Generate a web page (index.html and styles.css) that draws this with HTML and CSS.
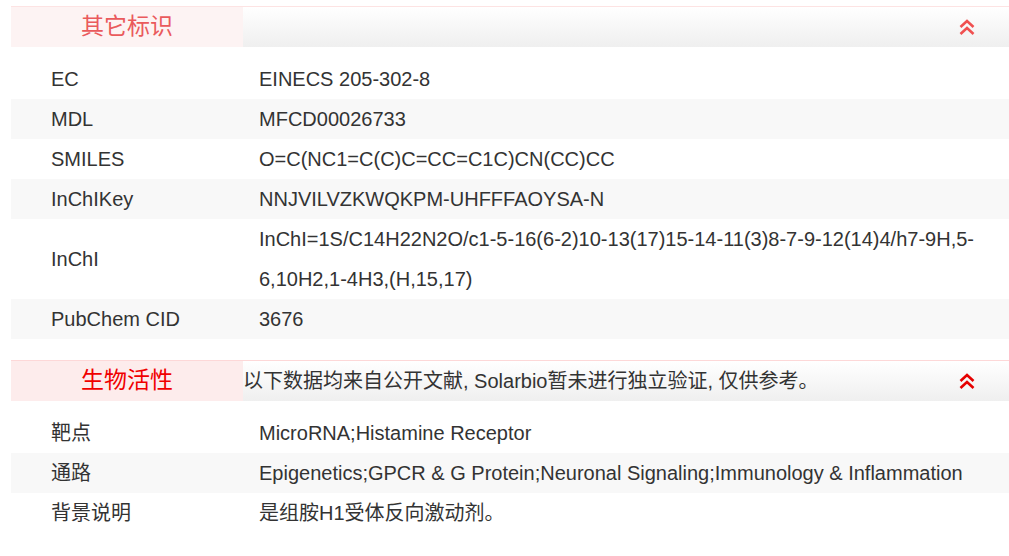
FILE: index.html
```html
<!DOCTYPE html>
<html>
<head>
<meta charset="utf-8">
<link rel="stylesheet" href="styles.css">
</head>
<body>
<div class="page">
  <section class="sec sec-faded">
    <div class="sec-head">
      <div class="sec-title">其它标识</div>
      <div class="sec-bar">
        <span class="sec-note"></span>
        <svg class="chev" width="16" height="16" viewBox="0 0 16 16"><polyline points="1.5,8 8,2 14.5,8"/><polyline points="1.5,15 8,9 14.5,15"/></svg>
      </div>
    </div>
    <div class="rows">
      <div class="row"><div class="k">EC</div><div class="v">EINECS 205-302-8</div></div>
      <div class="row alt"><div class="k">MDL</div><div class="v">MFCD00026733</div></div>
      <div class="row"><div class="k">SMILES</div><div class="v">O=C(NC1=C(C)C=CC=C1C)CN(CC)CC</div></div>
      <div class="row alt"><div class="k">InChIKey</div><div class="v">NNJVILVZKWQKPM-UHFFFAOYSA-N</div></div>
      <div class="row"><div class="k">InChI</div><div class="v">InChI=1S/C14H22N2O/c1-5-16(6-2)10-13(17)15-14-11(3)8-7-9-12(14)4/h7-9H,5-6,10H2,1-4H3,(H,15,17)</div></div>
      <div class="row alt"><div class="k">PubChem CID</div><div class="v">3676</div></div>
    </div>
  </section>
  <section class="sec sec-active">
    <div class="sec-head">
      <div class="sec-title">生物活性</div>
      <div class="sec-bar">
        <span class="sec-note">以下数据均来自公开文献, Solarbio暂未进行独立验证, 仅供参考。</span>
        <svg class="chev" width="16" height="16" viewBox="0 0 16 16"><polyline points="1.5,8 8,2 14.5,8"/><polyline points="1.5,15 8,9 14.5,15"/></svg>
      </div>
    </div>
    <div class="rows">
      <div class="row"><div class="k">靶点</div><div class="v">MicroRNA;Histamine Receptor</div></div>
      <div class="row alt"><div class="k">通路</div><div class="v">Epigenetics;GPCR &amp; G Protein;Neuronal Signaling;Immunology &amp; Inflammation</div></div>
      <div class="row"><div class="k">背景说明</div><div class="v">是组胺H1受体反向激动剂。</div></div>
    </div>
  </section>
</div>
</body>
</html>
```

FILE: styles.css
```css
html, body {
  margin: 0;
  padding: 0;
  background: #fff;
}
body {
  font-family: "Liberation Sans", Arial, "Noto Sans CJK SC", sans-serif;
  color: #333;
  font-size: 20px;
}
.page {
  padding: 6px 0 0 11px;
  display: flex;
  flex-direction: column;
  gap: 21px;
}
.sec-head {
  display: flex;
  height: 40px;
  border-top: 1px solid #fde3e3;
}
.sec-title {
  width: 232px;
  flex: none;
  display: flex;
  align-items: center;
  justify-content: center;
  font-size: 23px;
  line-height: 1;
  padding-bottom: 1px;
  box-sizing: border-box;
  background: #fdf3f3;
  color: #ea5a5c;
}
.sec-bar {
  flex: 1;
  display: flex;
  align-items: center;
  justify-content: space-between;
  padding-right: 34px;
  background: linear-gradient(to bottom, #ffffff, #efefef);
}
.sec-note {
  font-size: 20px;
  line-height: 1;
  color: #333;
}
.chev {
  display: block;
  fill: none;
  stroke: #f05050;
  stroke-width: 2.6;
  margin-bottom: 1px;
}
.sec-active .sec-head {
  border-top-color: #fdd8d8;
}
.sec-active .sec-title {
  background: #fdecec;
  color: #f00000;
}
.sec-active .chev {
  stroke: #e60000;
}
.rows {
  margin-top: 12px;
  display: flex;
  flex-direction: column;
}
.row {
  display: flex;
  align-items: center;
  min-height: 40px;
  line-height: 40px;
}
.row.alt {
  background: #f8f8f8;
}
.k {
  width: 248px;
  flex: none;
  padding-left: 40px;
  box-sizing: border-box;
}
.v {
  flex: 1;
  padding-right: 22px;
}
```
